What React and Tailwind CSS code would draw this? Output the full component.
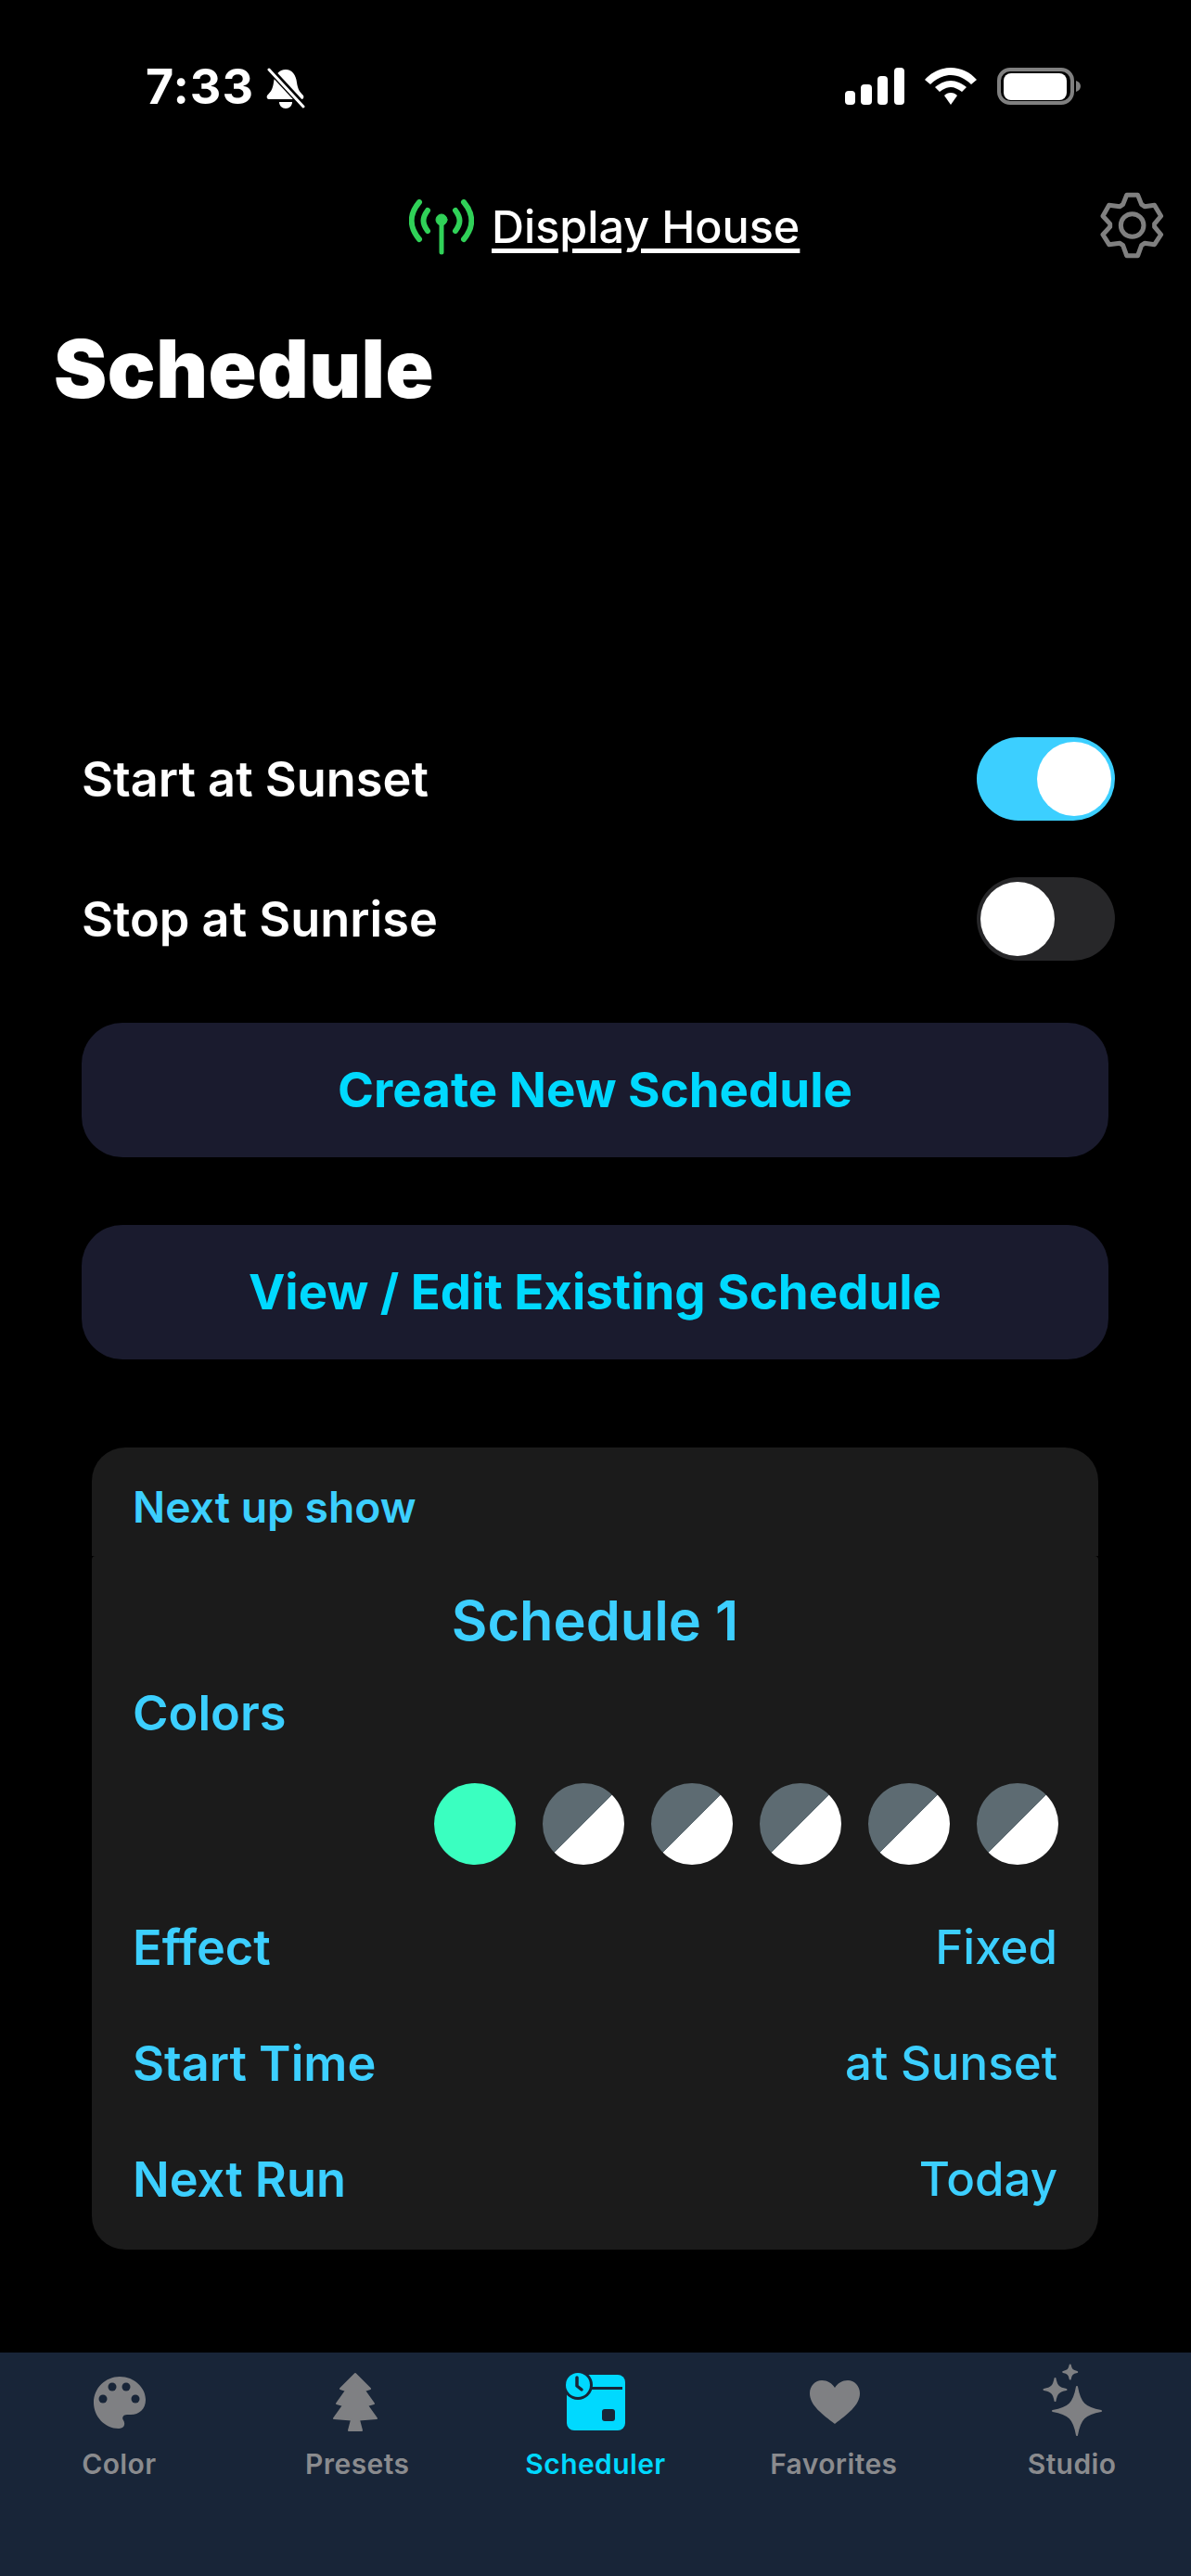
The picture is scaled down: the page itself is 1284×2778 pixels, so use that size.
import React from "react";

const TAB_BG = "#182538";

const star = (cx, cy, r) => {
  const k = r * 0.12;
  const s = r * 0.32;
  return `M${cx} ${cy - r} C${cx + k} ${cy - s} ${cx + s} ${cy - k} ${cx + r} ${cy} C${cx + s} ${cy + k} ${cx + k} ${cy + s} ${cx} ${cy + r} C${cx - k} ${cy + s} ${cx - s} ${cy + k} ${cx - r} ${cy} C${cx - s} ${cy - k} ${cx - k} ${cy - s} ${cx} ${cy - r}Z`;
};

const PaletteIcon = () => (
  <svg width="80" height="84" viewBox="0 0 80 84">
    <path d="M41 15C57 15 69 27 69 40C69 50 62 56 53 56L49 56C45 56 43 59 45 62C48 67 45 71 40 71C25 71 13 58 13 43C13 27 26 15 41 15Z" fill="#7f8083" />
    <circle cx="33" cy="26" r="4.5" fill={TAB_BG} />
    <circle cx="48" cy="26" r="4.5" fill={TAB_BG} />
    <circle cx="23" cy="39" r="4.5" fill={TAB_BG} />
    <circle cx="58" cy="39" r="4.5" fill={TAB_BG} />
  </svg>
);

const TreeIcon = () => (
  <svg width="80" height="84" viewBox="0 0 80 84">
    <path
      d="M38 12L54 28L48 30L58 44L51 46L61 60L42 61.500L45 73L31 73L34 61.500L15 60L25 46L18 44L28 30L22 28Z"
      fill="#7f8083"
      stroke="#7f8083"
      strokeWidth="2"
      strokeLinejoin="round"
    />
  </svg>
);

const SchedulerIcon = () => (
  <svg width="80" height="84" viewBox="0 0 80 84">
    <rect x="9" y="13" width="63" height="60" rx="8" fill="#00d9ff" />
    <path d="M33 27.500H69" stroke={TAB_BG} strokeWidth="3" />
    <circle cx="21" cy="24" r="16" fill={TAB_BG} />
    <circle cx="21" cy="24" r="13" fill="#00d9ff" />
    <path d="M20 16V25L25 29" fill="none" stroke={TAB_BG} strokeWidth="3.500" strokeLinecap="round" strokeLinejoin="round" />
    <rect x="47" y="50" width="14" height="13" rx="3" fill={TAB_BG} />
  </svg>
);

const HeartIcon = () => (
  <svg width="80" height="84" viewBox="0 0 80 84">
    <path d="M41 66C28 56 14 46 14 33C14 25 20 19 27 19C33 19 38 22 41 27C44 22 49 19 55 19C62 19 68 25 68 33C68 46 54 56 41 66Z" fill="#7f8083" />
  </svg>
);

const SparklesIcon = () => (
  <svg width="80" height="84" viewBox="0 0 80 84">
    <g fill="#7f8083" stroke="#7f8083" strokeWidth="2" strokeLinejoin="round">
      <path d={star(45, 52, 26)} />
      <path d={star(21.500, 29, 12)} />
      <path d={star(37.700, 10, 7.500)} />
    </g>
  </svg>
);

const tabs = [
  { label: "Color", Icon: PaletteIcon },
  { label: "Presets", Icon: TreeIcon },
  { label: "Scheduler", Icon: SchedulerIcon, active: true },
  { label: "Favorites", Icon: HeartIcon },
  { label: "Studio", Icon: SparklesIcon },
];

const StatusBar = () => (
  <div className="h-[190px] pt-[73px] pl-[157px] pr-[119px] flex justify-between items-start text-white">
    <div className="flex items-start gap-[13px]">
      <span className="text-[52px] leading-[42px] font-bold tracking-[1px]">7:33</span>
      <svg width="42" height="44" viewBox="0 0 42 44">
        <path d="M21 2C28 2 32 8 33 16C34 23 36 26 40 30C41 32 40 34 38 34H3C1 34 0 32 1 30C5 26 7 23 8 16C9 8 14 2 21 2Z" fill="#fff" />
        <path d="M14 37H28C28 41 25 44 21 44C17 44 14 41 14 37Z" fill="#fff" />
        <path d="M3 1L41 42" stroke="#000" strokeWidth="7" />
        <path d="M3 2L40 42" stroke="#fff" strokeWidth="3" strokeLinecap="round" />
      </svg>
    </div>
    <div className="flex items-start gap-[22px]">
      <svg width="64" height="40" viewBox="0 0 64 40" fill="#fff">
        <rect x="0" y="25" width="11" height="15" rx="4" />
        <rect x="17" y="18" width="12" height="22" rx="4" />
        <rect x="35" y="9" width="11" height="31" rx="4" />
        <rect x="53" y="0" width="11" height="40" rx="4" />
      </svg>
      <svg width="56" height="40" viewBox="0 0 56 40" fill="#fff">
        <path d="M28 0C39 0 49 5 56 13L50 18C44 12 36 8 28 8C20 8 12 12 6 18L0 13C7 5 17 0 28 0Z" />
        <path d="M28 14C34 14 40 17 45 21L40 26C36 23 32 21 28 21C24 21 20 23 16 26L11 21C16 17 22 14 28 14Z" />
        <path d="M28 27C31 27 33 28 35 30L28 40L21 30C23 28 25 27 28 27Z" />
      </svg>
      <svg width="90" height="40" viewBox="0 0 90 40">
        <rect x="2" y="2" width="79" height="36" rx="12" fill="none" stroke="#808080" strokeWidth="4" />
        <rect x="7" y="6" width="68" height="29" rx="8" fill="#fff" />
        <path d="M85 14C88 15 90 17 90 20C90 23 88 25 85 26Z" fill="#808080" />
      </svg>
    </div>
  </div>
);

const GearIcon = () => (
  <svg width="73.300" height="80" viewBox="40 46 220 240" fill="none" stroke="#808080" strokeWidth="15" strokeLinejoin="round">
    <path d="M132 62L168 62L180 92L190 99L222 95L243 130L222 155L222 165L243 190L222 222L190 218L180 225L168 258L132 258L120 225L110 218L75 222L55 190L78 165L78 155L55 130L75 95L110 99L120 92Z" />
    <circle cx="150" cy="160" r="37" />
  </svg>
);

const ConnectionBar = () => (
  <div className="pl-[441px] pr-[27px] h-[70px] mt-[20px] flex justify-between items-center">
    <div className="flex items-center gap-[19px]">
      <svg width="70" height="60" viewBox="0 0 70 60" fill="none" stroke="#30d158" strokeLinecap="round">
        <circle cx="35" cy="22" r="6" fill="#30d158" strokeWidth="1" />
        <path d="M35 24V57" strokeWidth="5" />
        <path d="M11 3C0 16 0 30 11 43" strokeWidth="6" />
        <path d="M59 3C70 16 70 30 59 43" strokeWidth="6" />
        <path d="M20 12C14 20 14 26 20 34" strokeWidth="6" />
        <path d="M50 12C56 20 56 26 50 34" strokeWidth="6" />
      </svg>
      <span className="text-white text-[48.500px] leading-[60px] font-medium underline decoration-[5px] underline-offset-[6px]">
        Display House
      </span>
    </div>
    <GearIcon />
  </div>
);

const Toggle = ({ on }) => (
  <div
    className={`w-[149px] h-[90px] rounded-full flex items-center px-[4px] ${
      on ? "bg-[#3ccfff] justify-end" : "bg-[#272729] justify-start"
    }`}
  >
    <div className="w-[80px] h-[80px] rounded-full bg-white" />
  </div>
);

const ToggleRow = ({ label, on }) => (
  <div className="flex items-center justify-between pl-[88px] pr-[82px] h-[90px]">
    <span className="text-white text-[52.300px] font-semibold">{label}</span>
    <Toggle on={on} />
  </div>
);

const ActionButton = ({ label }) => (
  <button className="w-[1107px] h-[145px] ml-[88px] rounded-[44px] bg-[#1a1b2e] text-[#00d9ff] text-[52.800px] font-bold">
    {label}
  </button>
);

const SplitDot = () => (
  <div className="w-[88px] h-[88px] rounded-full bg-[linear-gradient(135deg,#5d6b72_50%,#fff_50%)]" />
);

const InfoRow = ({ label, value }) => (
  <div className="flex items-center justify-between h-[125px] text-[52.300px] font-semibold">
    <span>{label}</span>
    <span className="text-[51px] font-medium">{value}</span>
  </div>
);

const NextUpCard = () => (
  <div className="w-[1085px] ml-[99px] mt-[95px] text-[#3ccfff]">
    <div className="h-[117px] rounded-t-[36px] bg-[#1b1b1b] pl-[44px] pr-[44px] pt-[37px] text-[46.300px] leading-[55px] font-semibold">
      Next up show
    </div>
    <div className="h-[748px] rounded-b-[36px] rounded-t-[4px] bg-[#1b1b1b] pl-[44px] pr-[44px]">
      <div className="text-center text-[59.500px] leading-[70px] font-semibold pt-[34px]">Schedule 1</div>
      <div className="text-[52.300px] leading-[64px] font-semibold mt-[33px]">Colors</div>
      <div className="flex justify-end gap-[29px] mt-[44px] -mr-[1px]">
        <div className="w-[88px] h-[88px] rounded-full bg-[#3affc0]" />
        <SplitDot />
        <SplitDot />
        <SplitDot />
        <SplitDot />
        <SplitDot />
      </div>
      <div className="mt-[27px]">
        <InfoRow label="Effect" value="Fixed" />
        <InfoRow label="Start Time" value="at Sunset" />
        <InfoRow label="Next Run" value="Today" />
      </div>
    </div>
  </div>
);

const TabBar = () => (
  <div className="mt-auto h-[241px] bg-[#182538] grid grid-cols-5 pt-[11px]">
    {tabs.map(({ label, Icon, active }) => (
      <div key={label} className="flex flex-col items-center">
        <Icon />
        <span
          className={`mt-[8px] text-[30px] leading-[34px] font-semibold tracking-[0.4px] ${
            active ? "text-[#00d9ff]" : "text-[#8a8b8e]"
          }`}
        >
          {label}
        </span>
      </div>
    ))}
  </div>
);

const App = () => (
  <div className="w-[1284px] h-[2778px] bg-black flex flex-col font-['Inter',sans-serif] overflow-hidden">
    <StatusBar />
    <ConnectionBar />
    <h1 className="text-white text-[86px] leading-[100px] font-black tracking-[0.5px] pl-[58px] mt-[68px]">Schedule</h1>
    <div className="mt-[347px] flex flex-col gap-[61px]">
      <ToggleRow label="Start at Sunset" on />
      <ToggleRow label="Stop at Sunrise" />
    </div>
    <div className="mt-[67px] flex flex-col gap-[73px]">
      <ActionButton label="Create New Schedule" />
      <ActionButton label="View / Edit Existing Schedule" />
    </div>
    <NextUpCard />
    <TabBar />
  </div>
);

export default App;
